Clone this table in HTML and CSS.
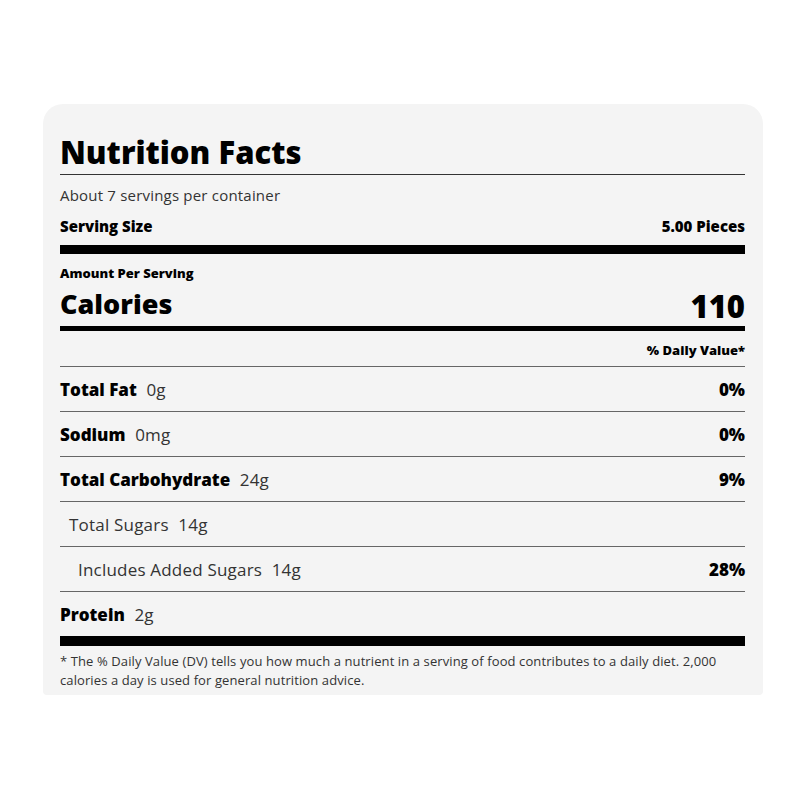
FILE: index.html
```html
<!DOCTYPE html>
<html>
<head>
<meta charset="utf-8">
<link rel="stylesheet" href="styles.css">
</head>
<body>
<div class="card">
  <h1 class="title">Nutrition Facts</h1>
  <div class="servings">About 7 servings per container</div>
  <div class="serving-size"><span>Serving Size</span><span>5.00 Pieces</span></div>
  <div class="amount">Amount Per Serving</div>
  <div class="calories"><span class="cal-label">Calories</span><span class="cal-value">110</span></div>
  <div class="dv-head">% Daily Value*</div>
  <div class="row"><span><b>Total Fat</b> <span class="amt">0g</span></span><b>0%</b></div>
  <div class="row"><span><b>Sodium</b> <span class="amt">0mg</span></span><b>0%</b></div>
  <div class="row"><span><b>Total Carbohydrate</b> <span class="amt">24g</span></span><b>9%</b></div>
  <div class="row indent1"><span>Total Sugars <span class="amt">14g</span></span></div>
  <div class="row indent2"><span>Includes Added Sugars <span class="amt">14g</span></span><b>28%</b></div>
  <div class="row last"><span><b>Protein</b> <span class="amt">2g</span></span></div>
  <p class="footnote">* The % Daily Value (DV) tells you how much a nutrient in a serving of food contributes to a daily diet. 2,000 calories a day is used for general nutrition advice.</p>
</div>
</body>
</html>
```

FILE: styles.css
```css
html, body {
  margin: 0;
  padding: 0;
  background: #fff;
}
body {
  font-family: "Open Sans", "Liberation Sans", sans-serif;
  color: #222;
}
.card {
  margin: 104px 0 0 43px;
  width: 720px;
  box-sizing: border-box;
  padding: 30px 18px 5px 17px;
  background: #f4f4f4;
  border-radius: 20px 20px 4px 4px;
}
.title {
  margin: 0;
  font-size: 31px;
  line-height: 36px;
  font-weight: 800;
  color: #000;
  padding-bottom: 4px;
  border-bottom: 1px solid #333;
}
.servings {
  margin-top: 10px;
  font-size: 15px;
  line-height: 20px;
  letter-spacing: 0.2px;
  color: #333;
}
.serving-size {
  margin-top: 11px;
  display: flex;
  justify-content: space-between;
  font-size: 15px;
  line-height: 20px;
  font-weight: 800;
  color: #000;
  padding-bottom: 9px;
  border-bottom: 9px solid #000;
}
.amount {
  margin-top: 10px;
  font-size: 13px;
  line-height: 18px;
  font-weight: 800;
  color: #000;
}
.calories {
  display: flex;
  justify-content: space-between;
  align-items: center;
  color: #000;
  font-weight: 800;
  height: 44px;
  border-bottom: 5px solid #000;
  box-sizing: content-box;
}
.cal-label {
  font-size: 27px;
  line-height: 40px;
}
.cal-value {
  font-size: 31px;
  line-height: 40px;
  padding-top: 3px;
}
.dv-head {
  text-align: right;
  font-size: 13px;
  font-weight: 800;
  color: #000;
  line-height: 18px;
  padding: 10px 0 7px;
  border-bottom: 1px solid #666;
}
.row {
  display: flex;
  justify-content: space-between;
  align-items: center;
  height: 44px;
  font-size: 17px;
  letter-spacing: 0.2px;
  color: #333;
  border-bottom: 1px solid #666;
}
.row b {
  color: #000;
  font-weight: 800;
  letter-spacing: 0;
}
.row .amt {
  margin-left: 5px;
}
.indent1 { padding-left: 9px; }
.indent2 { padding-left: 18px; }
.row.last {
  border-bottom: 10px solid #000;
}
.footnote {
  margin: 6px 0 0;
  font-size: 13px;
  line-height: 19px;
  letter-spacing: 0.1px;
  color: #333;
}
```
